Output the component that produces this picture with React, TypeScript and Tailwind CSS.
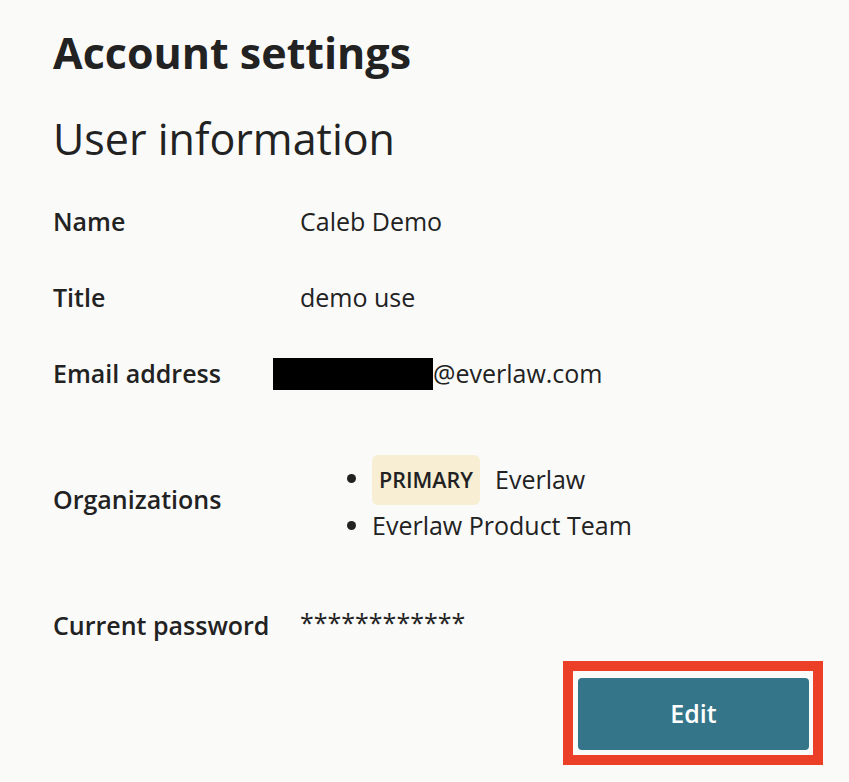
export default function App() {
  const font = { fontFamily: '"Open Sans", "Noto Sans", sans-serif' };
  return (
    <div className="min-h-screen bg-[#fafaf9] text-[#222222] pl-[53px]" style={font}>
      <h1 className="text-[43px] font-bold leading-[56px] pt-[25px]">Account settings</h1>
      <h2 className="text-[43px] font-normal leading-[56px] mt-[30px]">User information</h2>
      <div className="flex flex-col mt-[17px] text-[25px]">
        <div className="flex items-center h-[76px]">
          <div className="w-[247px] font-semibold">Name</div>
          <div>Caleb Demo</div>
        </div>
        <div className="flex items-center h-[76px]">
          <div className="w-[247px] font-semibold">Title</div>
          <div>demo use</div>
        </div>
        <div className="flex items-center h-[76px]">
          <div className="w-[220px] font-semibold">Email address</div>
          <div className="flex items-center">
            <span className="inline-block w-[160px] h-[32px] bg-black"></span>
            <span>@everlaw.com</span>
          </div>
        </div>
        <div className="flex items-center h-[176px]">
          <div className="w-[247px] font-semibold">Organizations</div>
          <ul className="list-disc pl-[72px] -mt-[1px]">
            <li className="leading-[45px]">
              <span className="inline-flex items-center">
                <span className="inline-flex items-center justify-center w-[108px] h-[50px] rounded-[6px] bg-[#f7eed3] text-[21.5px] font-semibold">PRIMARY</span>
                <span className="ml-[15px]">Everlaw</span>
              </span>
            </li>
            <li className="leading-[40px]">Everlaw Product Team</li>
          </ul>
        </div>
        <div className="flex items-center h-[76px]">
          <div className="w-[247px] font-semibold">Current password</div>
          <div className="-mt-[6px]">************</div>
        </div>
      </div>
      <div className="flex justify-end pr-[26px] -mt-[3px]">
        <div className="border-[10px] border-[#eb3f28] pl-[5px] pt-[7px] pr-[4px] pb-[5px]">
          <button className="w-[231px] h-[72px] rounded-[4px] bg-[#35758a] text-white text-[25px] font-semibold">
            Edit
          </button>
        </div>
      </div>
    </div>
  );
}
